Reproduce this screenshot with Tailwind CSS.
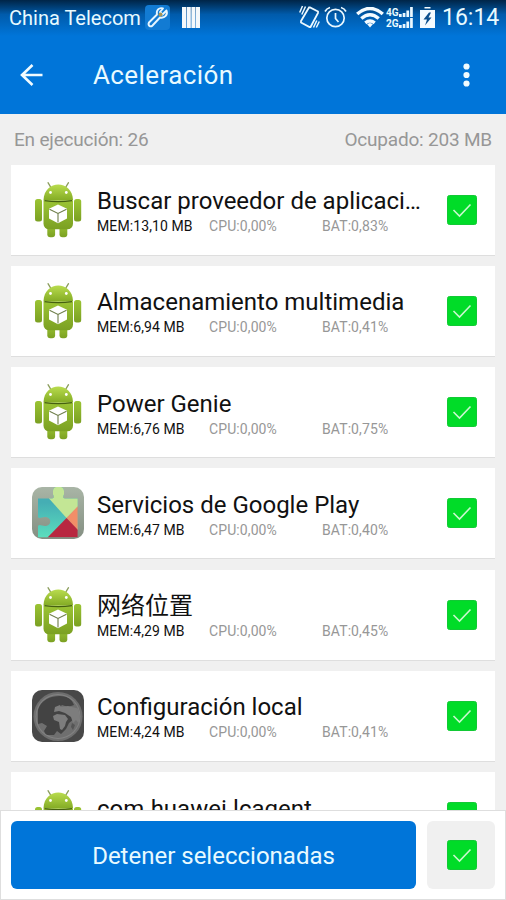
<!DOCTYPE html>
<html lang="es">
<head>
    <meta charset="UTF-8">
    <meta name="viewport" content="width=device-width, initial-scale=1.0">
    <title>Aceleración</title>
    <script src="https://cdn.jsdelivr.net/npm/@tailwindcss/browser@4"></script>
</head>
<body class="bg-[#f0f0f0] font-[Roboto,'Noto_Sans_CJK_SC',sans-serif]">

    <!-- Shared icons -->
    <svg class="absolute w-0 h-0">
        <defs>
            <linearGradient id="droidHead" x1="0" y1="0" x2="0" y2="1">
                <stop offset="0" stop-color="#b9dc4e"/>
                <stop offset="1" stop-color="#84ac25"/>
            </linearGradient>
            <linearGradient id="droidBody" x1="0" y1="0" x2="0" y2="1">
                <stop offset="0" stop-color="#9bc434"/>
                <stop offset="1" stop-color="#7ba022"/>
            </linearGradient>
            <linearGradient id="playBg" x1="0" y1="0" x2="0" y2="1">
                <stop offset="0" stop-color="#a9b5a6"/>
                <stop offset="1" stop-color="#848f82"/>
            </linearGradient>
            <linearGradient id="playTeal" x1="0" y1="0" x2="0" y2="1">
                <stop offset="0.3" stop-color="#45aeb4"/>
                <stop offset="1" stop-color="#5ce0bd"/>
            </linearGradient>
            <clipPath id="puzzle">
                <path d="M6 11.500h14c2.500 0 2-2 1-4V4c0-6 11-6 11 0v3.500c-1 2-1.500 4 1 4h12.700v38.800H6V39c1-2 4 0 7 0 7 0 7-9 0-9-3 0-6 2-7 0z"/>
            </clipPath>
            <clipPath id="globeClip">
                <circle cx="26" cy="26.500" r="21.500"/>
            </clipPath>
        </defs>
        <symbol id="android" viewBox="0 0 52 60">
            <path d="M16 2.700l3 5M36.500 2.700l-3 5" stroke="#8b9d5c" stroke-width="1.300" stroke-linecap="round"/>
            <rect x="15.300" y="44" width="7.800" height="13.300" rx="3" fill="url(#droidBody)"/>
            <rect x="27.500" y="44" width="7.800" height="13.300" rx="3" fill="url(#droidBody)"/>
            <rect x="3" y="19" width="7" height="22.500" rx="2.500" fill="url(#droidBody)"/>
            <rect x="42" y="19" width="7.200" height="22.500" rx="2.500" fill="url(#droidBody)"/>
            <path d="M11.500 20.300C12 -0.700 40.500 -0.700 41 20.300z" fill="url(#droidHead)"/>
            <path d="M11.500 20.300h29.500v23.500a5.500 5.500 0 0 1-5.500 5.500H17a5.500 5.500 0 0 1-5.500-5.500z" fill="url(#droidBody)"/>
            <path d="M12.500 20.600q13.700 2 27.500 0" fill="none" stroke="#456010" stroke-width="1.100"/>
            <circle cx="18.500" cy="12.500" r="1.400" fill="#fff"/>
            <circle cx="34.300" cy="12.500" r="1.400" fill="#fff"/>
            <path d="M26 24.500l9 4.300v9.700l-9 4.700-9-4.700v-9.700z" fill="#fff"/>
            <path d="M17.500 29.300l8.500 4.200 8.500-4.200M26 33.500v9" fill="none" stroke="#6d7d48" stroke-width="1.100"/>
        </symbol>
        <symbol id="play" viewBox="0 0 52 52">
            <rect width="52" height="52" rx="10" fill="url(#playBg)"/>
            <g clip-path="url(#puzzle)">
                <rect width="52" height="52" fill="url(#playTeal)"/>
                <path d="M17 11.500V0h35v14L34.500 31z" fill="#c3e695"/>
                <path d="M46 19v25L34.500 31z" fill="#f28e68"/>
                <path d="M34.500 31L15 51h31v-8z" fill="#b82740"/>
            </g>
        </symbol>
        <symbol id="globe" viewBox="0 0 52 52">
            <rect width="52" height="52" rx="10" fill="#484848"/>
            <circle cx="26" cy="26.500" r="24.500" fill="#6e6e6e"/>
            <circle cx="26" cy="26.500" r="22.500" fill="#838383"/>
            <g clip-path="url(#globeClip)">
                <rect width="52" height="52" fill="#6f6f6f"/>
                <path d="M6 20C9 10 18 6 28 6c7 0 12 3 14 9l-6 2-6-2-3 3 7 2 7 4 1 5-5 4-3 6-5 5-4-3-3 4h-8l-2-4 3-5-5-3-4 1z" fill="#434343"/>
                <path d="M21 26l4-2 8 1 3 4-2 3-1 4-3 4-2-1-1-7-5-2z" fill="#7d7d7d"/>
                <path d="M23 17l5-2 1 2 7-1 12 3v16l-4-5-3 3-2-6-6-4-6-2-5 1z" fill="#7d7d7d"/>
                <path d="M40 33l3 2-2 5-2-3z" fill="#555"/>
            </g>
        </symbol>
        <symbol id="check" viewBox="0 0 30 30">
            <rect x="0.500" y="0.500" width="29" height="29" rx="2" fill="#00dc28" stroke="#12c935"/>
            <path d="M6.500 15l6 6L23.500 9.500" fill="none" stroke="#c9f7cf" stroke-width="1.600"/>
        </symbol>
    </svg>

    <div class="h-[900px] w-[506px] flex flex-col overflow-hidden">

        <!-- Status bar + title -->
        <header class="h-[114px] shrink-0 bg-[#0075d9] text-[#e8faff]">
            <div class="h-9 flex items-center pl-[9px] pr-2 bg-linear-to-b from-[#002547] via-[#005bab] via-40% to-[#0075d9]">
                <span class="text-[20px] leading-9 w-[136px] whitespace-nowrap">China Telecom</span>
                <svg class="w-[25px] h-[25px] -mt-0.5" viewBox="0 0 25 25">
                    <rect width="25" height="25" rx="4" fill="#127bd3"/>
                    <path d="M18 3.500c-4-1.500-7 2-6 6l-8 8c-1.500 3 1.500 5 3.500 3l7.500-8c5 1 8-3 6.500-7l-4 4-2.500-2.500z" fill="none" stroke="#e8f6ff" stroke-width="1.900" stroke-linejoin="round"/>
                    <circle cx="15.500" cy="9.500" r="2" fill="#a69455"/>
                </svg>
                <svg class="w-[18px] h-[21px] ml-3 -mt-0.5" viewBox="0 0 18 21" fill="#f4f8fb">
                    <path d="M0 0h4.100v21H0zM4.700 0h4.100v21H4.700zM9.400 0h4.100v21H9.400zM14 0h4v21h-4z"/>
                </svg>
                <div class="flex-1"></div>
                <svg class="w-[21px] h-6 mr-[4px] -mt-0.5" viewBox="0 0 21 24" fill="none" stroke="#eaf8ff" stroke-width="1.500">
                    <path d="M10 2.500h1l8 4v1.500L11.500 22h-1l-8.500-4.500V16z" stroke-width="1.800"/>
                    <path d="M3.500 1L0.700 7.500M6.500 1.500L2.800 9.500M17.300 22.500l3-6M14.500 22.500l3.300-7"/>
                </svg>
                <svg class="w-[23px] h-[22px] mr-[9px] -mt-0.5" viewBox="0 0 23 22" fill="none" stroke="#eaf8ff" stroke-width="1.700">
                    <circle cx="11.500" cy="12" r="8.700"/>
                    <path d="M11.500 7v5.500l3 3.500M1 5.500Q2.500 2.500 6 1.500M17 1.500q3.500 1 5 4"/>
                </svg>
                <svg class="w-7 h-[21px] mr-[2px] -mt-0.5" viewBox="0 0 28 21" fill="none" stroke="#f4fbff" stroke-width="3.500">
                    <path d="M1.200 7Q14-4 26.800 7M5.300 11.500q8.700-7.500 17.400 0M9.300 15.800q4.700-3.500 9.400 0"/>
                    <path d="M14 16l3 1-3 3.500-3-3.500z" fill="#f4fbff" stroke="none"/>
                </svg>
                <div class="flex flex-col text-[10px] leading-[11px] font-bold w-[27px] mr-[7px] -mt-px">
                    <div class="flex items-end justify-between">4G
                        <svg class="w-[14px] h-[11px]" viewBox="0 0 14 11" fill="#eaf8ff"><path d="M0 7h2.700v3H0zM3.700 6h2.700v4H3.700zM7.400 3.500h2.700V10H7.400zM11.100 0h2.700v10h-2.700z"/></svg>
                    </div>
                    <div class="flex items-end justify-between">2G
                        <svg class="w-[14px] h-[11px]" viewBox="0 0 14 11" fill="#eaf8ff"><path d="M0 7h2.700v3H0zM3.700 6h2.700v4H3.700zM7.400 3.500h2.700V10H7.400zM11.100 0h2.700v10h-2.700z"/></svg>
                    </div>
                </div>
                <svg class="w-[15px] h-[21px] mr-[7px] -mt-0.5" viewBox="0 0 15 21">
                    <path d="M4.500 0h6v1.500h-6zM0 3h15v18H0z" fill="#f4fbff"/>
                    <path d="M9 5.500L3.500 12.500h3.500l-2 6 6.500-8H8.500l2.500-5z" fill="#0b4f8c"/>
                </svg>
                <span class="text-[23px] leading-9 w-[56px] whitespace-nowrap">16:14</span>
            </div>
            <div class="h-[78px] flex items-center pl-[20px] pr-[36px]">
                <svg class="w-[23px] h-[22px] mr-[50px]" viewBox="0 0 23 22" fill="none" stroke="#f0fbff" stroke-width="2.600">
                    <path d="M12.500 1L2 11l10.500 10M2 11h20.500"/>
                </svg>
                <h1 class="flex-1 text-[26px] leading-8 whitespace-nowrap tracking-[0.4px]">Aceleración</h1>
                <svg class="w-[7px] h-6" viewBox="0 0 7 24" fill="#f0fbff">
                    <circle cx="3.500" cy="3.500" r="3.100"/><circle cx="3.500" cy="12" r="3.100"/><circle cx="3.500" cy="20.500" r="3.100"/>
                </svg>
            </div>
        </header>

        <div class="h-[50.5px] shrink-0 flex justify-between items-center px-[14px] pt-[2px] text-[19px] tracking-[-0.2px] text-[#979797]">
            <span>En ejecución: 26</span>
            <span>Ocupado: 203 MB</span>
        </div>

        <!-- Process list -->
        <main class="flex-1 min-h-0 overflow-hidden flex flex-col gap-[10.3px] px-[11px]">
            <div class="h-[91px] shrink-0 flex items-center bg-white border-b border-[#dedede] pl-[21px] pr-[18px]">
                <svg class="w-[52px] h-[60px] mr-[13px]"><use href="#android"/></svg>
                <div class="flex-1 min-w-0 pt-[3px]">
                    <h2 class="text-[24px] leading-[30px] text-[#111] whitespace-nowrap">Buscar proveedor de aplicaci…</h2>
                    <div class="flex text-[14px] leading-5 tracking-[0.1px] text-[#979797]"><span class="w-[112px] text-[#111]">MEM:13,10 MB</span><span class="w-[113px]">CPU:0,00%</span><span>BAT:0,83%</span></div>
                </div>
                <svg class="w-[30px] h-[30px]"><use href="#check"/></svg>
            </div>
            <div class="h-[91px] shrink-0 flex items-center bg-white border-b border-[#dedede] pl-[21px] pr-[18px]">
                <svg class="w-[52px] h-[60px] mr-[13px]"><use href="#android"/></svg>
                <div class="flex-1 min-w-0 pt-[3px]">
                    <h2 class="text-[24px] leading-[30px] text-[#111] whitespace-nowrap">Almacenamiento multimedia</h2>
                    <div class="flex text-[14px] leading-5 tracking-[0.1px] text-[#979797]"><span class="w-[112px] text-[#111]">MEM:6,94 MB</span><span class="w-[113px]">CPU:0,00%</span><span>BAT:0,41%</span></div>
                </div>
                <svg class="w-[30px] h-[30px]"><use href="#check"/></svg>
            </div>
            <div class="h-[91px] shrink-0 flex items-center bg-white border-b border-[#dedede] pl-[21px] pr-[18px]">
                <svg class="w-[52px] h-[60px] mr-[13px]"><use href="#android"/></svg>
                <div class="flex-1 min-w-0 pt-[3px]">
                    <h2 class="text-[24px] leading-[30px] text-[#111] whitespace-nowrap">Power Genie</h2>
                    <div class="flex text-[14px] leading-5 tracking-[0.1px] text-[#979797]"><span class="w-[112px] text-[#111]">MEM:6,76 MB</span><span class="w-[113px]">CPU:0,00%</span><span>BAT:0,75%</span></div>
                </div>
                <svg class="w-[30px] h-[30px]"><use href="#check"/></svg>
            </div>
            <div class="h-[91px] shrink-0 flex items-center bg-white border-b border-[#dedede] pl-[21px] pr-[18px]">
                <svg class="w-[52px] h-[52px] mr-[13px]"><use href="#play"/></svg>
                <div class="flex-1 min-w-0 pt-[3px]">
                    <h2 class="text-[24px] leading-[30px] text-[#111] whitespace-nowrap">Servicios de Google Play</h2>
                    <div class="flex text-[14px] leading-5 tracking-[0.1px] text-[#979797]"><span class="w-[112px] text-[#111]">MEM:6,47 MB</span><span class="w-[113px]">CPU:0,00%</span><span>BAT:0,40%</span></div>
                </div>
                <svg class="w-[30px] h-[30px]"><use href="#check"/></svg>
            </div>
            <div class="h-[91px] shrink-0 flex items-center bg-white border-b border-[#dedede] pl-[21px] pr-[18px]">
                <svg class="w-[52px] h-[60px] mr-[13px]"><use href="#android"/></svg>
                <div class="flex-1 min-w-0 pt-[3px]">
                    <h2 class="text-[24px] leading-[30px] text-[#111] whitespace-nowrap">网络位置</h2>
                    <div class="flex text-[14px] leading-5 tracking-[0.1px] text-[#979797]"><span class="w-[112px] text-[#111]">MEM:4,29 MB</span><span class="w-[113px]">CPU:0,00%</span><span>BAT:0,45%</span></div>
                </div>
                <svg class="w-[30px] h-[30px]"><use href="#check"/></svg>
            </div>
            <div class="h-[91px] shrink-0 flex items-center bg-white border-b border-[#dedede] pl-[21px] pr-[18px]">
                <svg class="w-[52px] h-[52px] mr-[13px]"><use href="#globe"/></svg>
                <div class="flex-1 min-w-0 pt-[3px]">
                    <h2 class="text-[24px] leading-[30px] text-[#111] whitespace-nowrap">Configuración local</h2>
                    <div class="flex text-[14px] leading-5 tracking-[0.1px] text-[#979797]"><span class="w-[112px] text-[#111]">MEM:4,24 MB</span><span class="w-[113px]">CPU:0,00%</span><span>BAT:0,41%</span></div>
                </div>
                <svg class="w-[30px] h-[30px]"><use href="#check"/></svg>
            </div>
            <!-- partly hidden behind the action bar -->
            <div class="h-[91px] shrink-0 flex items-center bg-white pl-[21px] pr-[18px]">
                <svg class="w-[52px] h-[60px] mr-[13px]"><use href="#android"/></svg>
                <div class="flex-1 min-w-0 pb-[17px]">
                    <h2 class="text-[24px] leading-[30px] text-[#111] whitespace-nowrap">com.huawei.lcagent</h2>
                </div>
                <svg class="w-[30px] h-[30px] mb-0.5"><use href="#check"/></svg>
            </div>
        </main>

        <!-- Bottom action bar -->
        <footer class="h-[90px] shrink-0 flex gap-[11px] bg-white border border-[#dedede] pt-[10px] px-[10px] pb-[11px]">
            <button class="w-[405px] h-[68px] rounded-md bg-[#0075d9] text-[#e8faff] text-[24px] pt-0.5">Detener seleccionadas</button>
            <div class="w-[68px] h-[68px] rounded-md bg-[#f0f0f0] flex items-center justify-center pl-px">
                <svg class="w-[30px] h-[30px]"><use href="#check"/></svg>
            </div>
        </footer>
    </div>

</body>
</html>
